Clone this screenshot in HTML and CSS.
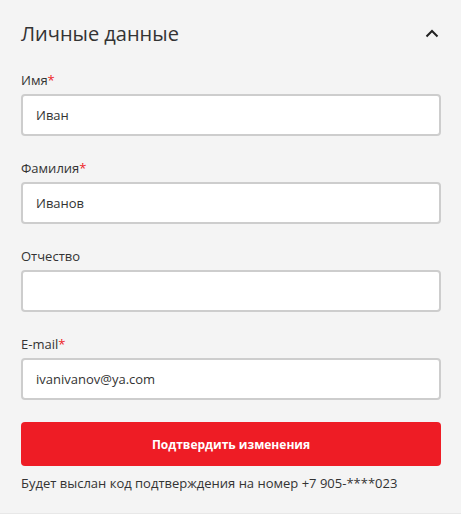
FILE: index.html
```html
<!DOCTYPE html>
<html lang="ru">
<head>
<meta charset="utf-8">
<link rel="stylesheet" href="styles.css">
</head>
<body>
<section class="panel">
  <div class="panel-head">
    <h2 class="panel-title">Личные данные</h2>
    <svg class="chevron" width="14" height="9" viewBox="0 0 14 9"><polyline points="1.5,7.5 7,2 12.5,7.5" fill="none" stroke="#222" stroke-width="2"/></svg>
  </div>
  <form class="form">
    <div class="field">
      <label class="label">Имя<span class="req">*</span></label>
      <div class="input">Иван</div>
    </div>
    <div class="field">
      <label class="label">Фамилия<span class="req">*</span></label>
      <div class="input">Иванов</div>
    </div>
    <div class="field">
      <label class="label">Отчество</label>
      <div class="input"></div>
    </div>
    <div class="field">
      <label class="label">E-mail<span class="req">*</span></label>
      <div class="input">ivanivanov@ya.com</div>
    </div>
    <button type="button" class="submit">Подтвердить изменения</button>
    <p class="note">Будет выслан код подтверждения на номер +7 905-****023</p>
  </form>
</section>
</body>
</html>
```
FILE: styles.css
```css
* { box-sizing: border-box; }
body {
  margin: 0;
  background: #fff;
  font-family: "Open Sans", "Noto Sans", sans-serif;
  color: #333;
}
.panel {
  width: 461px;
  height: 514px;
  background: #f4f4f4;
  border-bottom: 1px solid #e8e8e8;
  padding: 19px 20px 0 21px;
}
.panel-head {
  display: flex;
  align-items: center;
  justify-content: space-between;
  height: 30px;
}
.panel-title {
  margin: 0;
  font-size: 20px;
  font-weight: 400;
  line-height: 30px;
  color: #333;
}
.chevron { margin-right: 2px; margin-top: -1px; }
.form {
  display: flex;
  flex-direction: column;
  margin-top: 23px;
}
.field {
  display: flex;
  flex-direction: column;
  gap: 6px;
  margin-bottom: 24px;
}
.field:nth-child(4) { margin-bottom: 0; }
.label {
  font-size: 13px;
  line-height: 16px;
  color: #333;
}
.req { color: #ee1c25; }
.input {
  height: 42px;
  background: #fff;
  border: 2px solid #cdcdcd;
  border-radius: 4px;
  padding: 0 13px;
  font-size: 13px;
  line-height: 38px;
  color: #333;
}
.submit {
  margin-top: 22px;
  height: 44px;
  border: 0;
  border-radius: 4px;
  background: #ee1c25;
  color: #fff;
  font-family: "Open Sans", "Noto Sans", sans-serif;
  font-weight: 700;
  font-size: 12px;
}
.note {
  margin: 8px 0 0;
  font-size: 13px;
  line-height: 18px;
  color: #333;
}
```
